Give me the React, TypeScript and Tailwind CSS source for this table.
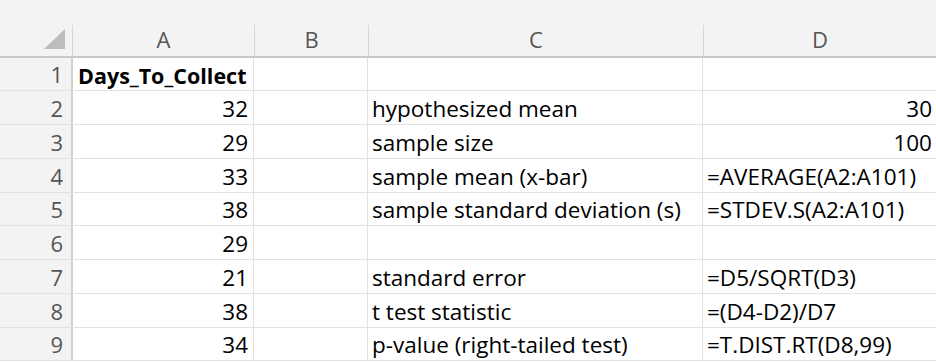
import React from 'react';

type Row = {
  n: number;
  h: string;
  a?: string;
  c?: string;
  d?: string;
  dRight?: boolean;
  bold?: boolean;
};

const rows: Row[] = [
  { n: 1, h: 'h-[33px]', a: 'Days_To_Collect', bold: true },
  { n: 2, h: 'h-[34px]', a: '32', c: 'hypothesized mean', d: '30', dRight: true },
  { n: 3, h: 'h-[34px]', a: '29', c: 'sample size', d: '100', dRight: true },
  { n: 4, h: 'h-[34px]', a: '33', c: 'sample mean (x-bar)', d: '=AVERAGE(A2:A101)' },
  { n: 5, h: 'h-[33px]', a: '38', c: 'sample standard deviation (s)', d: '=STDEV.S(A2:A101)' },
  { n: 6, h: 'h-[34px]', a: '29' },
  { n: 7, h: 'h-[34px]', a: '21', c: 'standard error', d: '=D5/SQRT(D3)' },
  { n: 8, h: 'h-[34px]', a: '38', c: 't test statistic', d: '=(D4-D2)/D7' },
  { n: 9, h: 'h-[33px]', a: '34', c: 'p-value (right-tailed test)', d: '=T.DIST.RT(D8,99)' },
];

const font = "font-['Open_Sans','Noto_Sans',sans-serif]";

export default function App() {
  return (
    <div className={`w-[936px] h-[363px] overflow-hidden bg-white ${font}`}>
      {/* column headers */}
      <div className="flex h-[58px] bg-[#f3f3f3] border-b-2 border-[#c8c8c8] text-[#555] text-[22px]">
        <div className="w-[73px] shrink-0 flex items-end justify-end pr-[6px] pb-[6px] border-r border-[#d6d6d6] mt-[25px]">
          <svg width="22" height="21" viewBox="0 0 22 21">
            <polygon points="0,20 21,0 21,20" fill="#bdbdbd" />
          </svg>
        </div>
        <div className="w-[182px] shrink-0 mt-[25px] border-r border-[#d6d6d6] flex items-center justify-center pb-[2px]">A</div>
        <div className="w-[114px] shrink-0 mt-[25px] border-r border-[#d6d6d6] flex items-center justify-center pb-[2px]">B</div>
        <div className="w-[335px] shrink-0 mt-[25px] border-r border-[#d6d6d6] flex items-center justify-center pb-[2px]">C</div>
        <div className="flex-1 mt-[25px] flex items-center justify-center pb-[2px]">D</div>
      </div>

      {rows.map((r) => (
        <div key={r.n} className={`flex ${r.h} border-b border-[#e1e1e1] text-[22.5px] leading-none text-black`}>
          <div className="w-[73px] shrink-0 bg-[#f3f3f3] border-r-2 border-[#d0d0d0] flex items-center justify-end pr-[8px] text-[#555] text-[22px]">
            {r.n}
          </div>
          <div
            className={`w-[181px] shrink-0 border-r border-[#e1e1e1] flex items-end pb-[4px] px-[5px] whitespace-nowrap ${
              r.bold ? 'justify-start font-bold text-[21.5px]' : 'justify-end'
            }`}
          >
            {r.a}
          </div>
          <div className="w-[114px] shrink-0 border-r border-[#e1e1e1]" />
          <div className="w-[335px] shrink-0 border-r border-[#e1e1e1] flex items-end pb-[4px] px-[4px] whitespace-nowrap">
            {r.c}
          </div>
          <div
            className={`flex-1 flex items-end pb-[4px] px-[4px] whitespace-nowrap ${
              r.dRight ? 'justify-end' : 'justify-start'
            }`}
          >
            {r.d}
          </div>
        </div>
      ))}
    </div>
  );
}
